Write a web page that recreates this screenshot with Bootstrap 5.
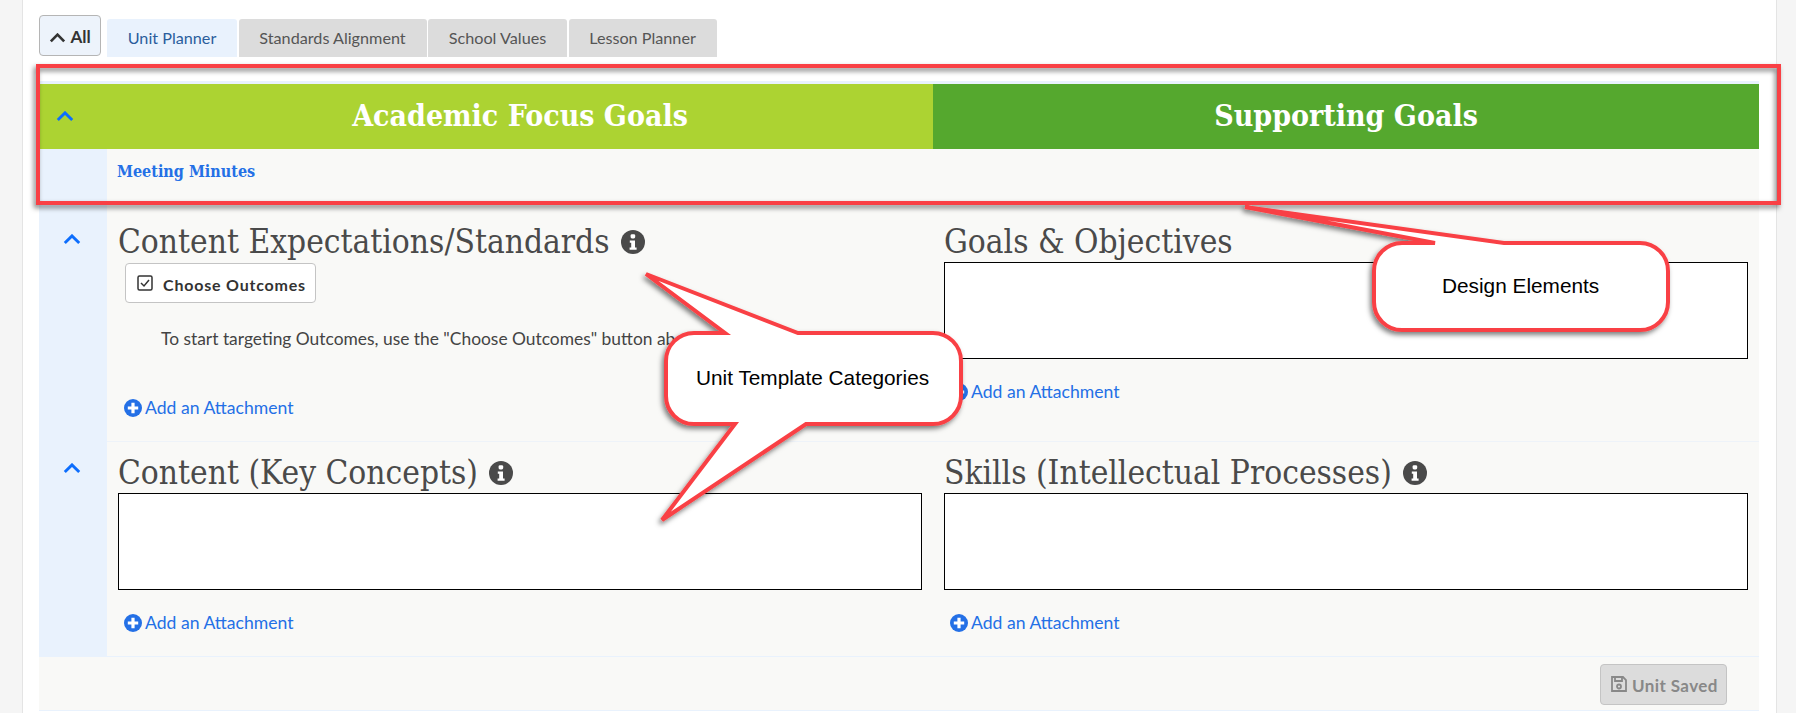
<!DOCTYPE html>
<html lang="en">
<head>
<meta charset="UTF-8">
<title>Unit Planner</title>
<link rel="stylesheet" href="https://cdn.jsdelivr.net/npm/bootstrap@5.3.0/dist/css/bootstrap.min.css">
<style>
body { background: #f5f5f5; font-family: Lato, sans-serif; color: #444; overflow: hidden; }
.sheet { position: relative; margin-left: 22px; width: 1755px; height: 713px; background: #fff; border-left: 1px solid #e4e4e4; border-right: 1px solid #e4e4e4; padding: 15px 17px 0 16px; }
.all-btn { width: 62px; height: 41px; padding: 2px 0 0; font-size: 17px; font-weight: 700; color: #333; background: #edf3fb; border: 1px solid #b5b5b5; border-radius: 4px; }
.plan-tabs { gap: 1.5px; margin-left: 6px; margin-top: 4px; }
.plan-tabs .nav-link { height: 38px; padding: 0; line-height: 38px; text-align: center; font-size: 16.2px; color: #555; background: #dcdcdc; border-radius: 3px 3px 0 0; }
.plan-tabs .nav-link.active { color: #2a5d9c; background: #e9f2fd; }
.tab-a { width: 130px; } .tab-b { width: 188px; } .tab-c { width: 139px; } .tab-d { width: 148px; }
.goal-band { margin-top: 24px; border-top: 3px solid #e9f2fd; height: 68px; }
.band-side { width: 68px; background: #acd332; }
.band-one { width: 826px; background: #acd332; }
.band-two { width: 826px; background: #55a82e; }
.band-one h2, .band-two h2 { margin: 0; font: 700 30px/64px "DejaVu Serif Condensed", serif; color: #fff; text-align: center; }
.plan-row { display: flex; background: #f9f9f7; }
.plan-side { width: 68px; flex: none; background: #e9f2fd; text-align: center; }
.plan-side svg { display: block; margin: 0 auto; position: relative; left: -1px; }
.side-one { padding-top: 29px; }
.side-two { padding-top: 21px; }
.plan-body { width: 1652px; flex: none; display: flex; }
.plan-col { width: 826px; padding: 0 11px; }
.minutes { height: 56px; }
.minutes a { display: block; padding: 14px 0 0 10px; font: 700 16px/18px "DejaVu Serif Condensed", serif; color: #2470e6; text-decoration: none; }
.row-one { height: 237px; }
.row-one .plan-body { padding-top: 17px; border-bottom: 1px solid #eef3f9; }
.row-two { height: 215px; }
.row-two .plan-body { padding-top: 11px; border-bottom: 1px solid #e9f2fd; }
.row-head { margin: 0; height: 40px; font: 400 33.2px/40px "DejaVu Serif Condensed", serif; color: #4a4a4a; display: flex; align-items: center; gap: 11px; white-space: nowrap; }
.write-box { height: 97px; background: #fff; border: 1px solid #000; }
.pick-btn { display: inline-flex; align-items: center; gap: 10px; width: 191px; height: 40px; margin: 1px 0 0 7px; padding: 3px 0 0 11px; font-size: 16px; font-weight: 700; letter-spacing: .8px; color: #333; background: #fff; border: 1px solid #c4c4c4; border-radius: 4px; white-space: nowrap; }
.pick-btn svg { margin-top: -3px; }
.hint { margin: 24px 0 0 43px; font-size: 17.4px; line-height: 24px; color: #444; white-space: nowrap; }
.attach { display: inline-flex; align-items: center; gap: 3px; height: 26px; margin-left: 6px; font-size: 17.6px; color: #2470e6; text-decoration: none; }
.attach-left { margin-top: 44px; }
.attach-right { margin-top: 20px; }
.foot { height: 54px; border-bottom: 1px solid #e9f2fd; background: #f9f9f7; padding: 7px 32px 0 0; width: 1720px; }
.saved-btn, .saved-btn:disabled { display: inline-flex; align-items: center; gap: 4px; width: 127px; height: 41px; padding: 2px 0 0 9px; font-size: 17px; font-weight: 700; letter-spacing: .4px; color: #888; background: #dcdcdc; border: 1px solid #c4c4c4; border-radius: 4px; opacity: 1; white-space: nowrap; }
.saved-btn svg { margin-top: -3px; }
.notes { position: absolute; left: -23px; top: 0; width: 1796px; height: 713px; pointer-events: none; }
.notes text { font-family: "Liberation Sans", sans-serif; font-size: 20.8px; fill: #000; }
</style>
</head>
<body>
<svg width="0" height="0" class="d-block">
  <defs>
    <symbol id="chev" viewBox="0 0 20 12"><polyline points="2,10 10,2 18,10" fill="none" stroke="currentColor" stroke-width="3.2"/></symbol>
    <symbol id="info" viewBox="0 0 24 24"><circle cx="12" cy="12" r="12" fill="#4a4a4a"/><rect x="9.6" y="4.2" width="4.6" height="4.2" rx="1.4" fill="#fff"/><path d="M8.8 10.4h5.2v7h1.6v2.4H8.6v-2.4h1.6v-4.6H8.8z" fill="#fff"/></symbol>
    <symbol id="plus" viewBox="0 0 18 18"><circle cx="9" cy="9" r="9" fill="#2470e6"/><path d="M7.4 3.8h3.2v3.6h3.6v3.2h-3.6v3.6H7.4v-3.6H3.8V7.4h3.6z" fill="#fff"/></symbol>
  </defs>
</svg>
<div class="sheet">
  <div class="d-flex align-items-start">
    <button class="btn all-btn" type="button"><svg width="17" height="10" class="me-1"><use href="#chev"/></svg>All</button>
    <ul class="nav plan-tabs">
      <li class="nav-item"><a class="nav-link active tab-a" href="#">Unit Planner</a></li>
      <li class="nav-item"><a class="nav-link tab-b" href="#">Standards Alignment</a></li>
      <li class="nav-item"><a class="nav-link tab-c" href="#">School Values</a></li>
      <li class="nav-item"><a class="nav-link tab-d" href="#">Lesson Planner</a></li>
    </ul>
  </div>

  <div class="goal-band d-flex">
    <div class="band-side d-flex justify-content-center align-items-center text-primary pe-3"><svg width="18" height="11"><use href="#chev"/></svg></div>
    <div class="band-one"><h2>Academic Focus Goals</h2></div>
    <div class="band-two"><h2>Supporting Goals</h2></div>
  </div>

  <div class="plan-row minutes">
    <div class="plan-side"></div>
    <div><a href="#">Meeting Minutes</a></div>
  </div>

  <div class="plan-row row-one">
    <div class="plan-side side-one text-primary"><svg width="18" height="11"><use href="#chev"/></svg></div>
    <div class="plan-body">
      <div class="plan-col">
        <h3 class="row-head">Content Expectations/Standards <svg width="24" height="24"><use href="#info"/></svg></h3>
        <button class="btn pick-btn" type="button">
          <svg width="16" height="16" viewBox="0 0 16 16"><rect x="1" y="1" width="14" height="14" rx="1.5" fill="none" stroke="#333" stroke-width="1.5"/><polyline points="4,8 7,11 12,5" fill="none" stroke="#333" stroke-width="1.5"/></svg>
          Choose Outcomes
        </button>
        <p class="hint">To start targeting Outcomes, use the "Choose Outcomes" button above.</p>
        <a class="attach attach-left" href="#"><svg width="18" height="18"><use href="#plus"/></svg>Add an Attachment</a>
      </div>
      <div class="plan-col">
        <h3 class="row-head">Goals &amp; Objectives</h3>
        <div class="write-box"></div>
        <a class="attach attach-right" href="#"><svg width="18" height="18"><use href="#plus"/></svg>Add an Attachment</a>
      </div>
    </div>
  </div>

  <div class="plan-row row-two">
    <div class="plan-side side-two text-primary"><svg width="18" height="11"><use href="#chev"/></svg></div>
    <div class="plan-body">
      <div class="plan-col">
        <h3 class="row-head">Content (Key Concepts) <svg width="24" height="24"><use href="#info"/></svg></h3>
        <div class="write-box"></div>
        <a class="attach attach-right" href="#"><svg width="18" height="18"><use href="#plus"/></svg>Add an Attachment</a>
      </div>
      <div class="plan-col">
        <h3 class="row-head">Skills (Intellectual Processes) <svg width="24" height="24"><use href="#info"/></svg></h3>
        <div class="write-box"></div>
        <a class="attach attach-right" href="#"><svg width="18" height="18"><use href="#plus"/></svg>Add an Attachment</a>
      </div>
    </div>
  </div>

  <div class="foot text-end">
    <button class="btn saved-btn" type="button" disabled>
      <svg width="18" height="18" viewBox="0 0 18 18" fill="none" stroke="#888" stroke-width="1.8"><path d="M2 2h11l3 3v11H2z"/><path d="M5 2v4h7V2"/><circle cx="9" cy="11.5" r="2"/></svg>
      Unit Saved
    </button>
  </div>

  <!-- red annotations drawn over the screenshot -->
  <svg class="notes" viewBox="0 0 1796 713">
    <defs><filter id="drop" x="-5%" y="-5%" width="110%" height="115%"><feDropShadow dx="-2" dy="3" stdDeviation="2.5" flood-color="#000" flood-opacity=".5"/></filter></defs>
    <g fill="#fff" stroke="#f94144" stroke-width="4" filter="url(#drop)">
      <rect x="38" y="66" width="1741" height="137" fill="none"/>
      <path d="M1245 207L1504 243H1640a28 28 0 0 1 28 28V302a28 28 0 0 1-28 28H1402a28 28 0 0 1-28-28V271a28 28 0 0 1 28-28H1435Z"/>
      <path d="M646 274L798 333H933a28 28 0 0 1 28 28V396a28 28 0 0 1-28 28H806L662 520L735 424H694a28 28 0 0 1-28-28V361a28 28 0 0 1 28-28H725Z"/>
    </g>
    <text x="696" y="385">Unit Template Categories</text>
    <text x="1442" y="293">Design Elements</text>
  </svg>
</div>
</body>
</html>
